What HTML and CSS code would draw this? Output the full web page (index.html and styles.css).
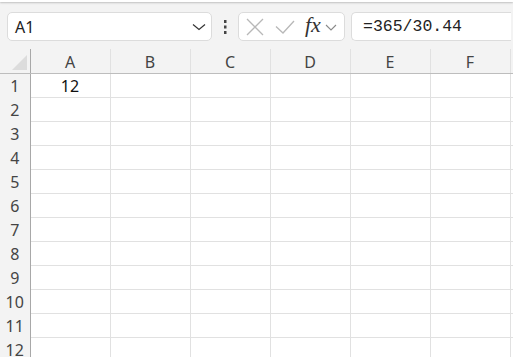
FILE: index.html
```html
<!DOCTYPE html>
<html lang="en">
<head>
  <meta charset="UTF-8">
  <title>Sheet</title>
  <link rel="stylesheet" href="styles.css">
</head>
<body>
  <div class="ribbon-edge"></div>

  <div class="formula-bar">
    <div class="name-box">
      <span>A1</span>
      <svg class="chevron" width="14" height="8" viewBox="0 0 14 8"><path d="M1 1.5 L7 6.5 L13 1.5" fill="none" stroke="#333" stroke-width="1.2"/></svg>
    </div>
    <div class="more">
      <svg width="4" height="16" viewBox="0 0 4 16"><rect x="1" y="1" width="2.5" height="3" fill="#444"/><rect x="1" y="6.5" width="2.5" height="3" fill="#444"/><rect x="1" y="12" width="2.5" height="3" fill="#444"/></svg>
    </div>
    <div class="buttons">
      <svg width="18" height="18" viewBox="0 0 18 18"><path d="M1 1 L17 17 M17 1 L1 17" stroke="#b8b8b8" stroke-width="1.3"/></svg>
      <svg width="20" height="14" viewBox="0 0 20 14"><path d="M1 6.5 L8 13 L19 1" fill="none" stroke="#b8b8b8" stroke-width="1.3"/></svg>
      <span class="fx">fx</span>
      <svg width="12" height="7" viewBox="0 0 12 7"><path d="M1 1 L6 6 L11 1" fill="none" stroke="#8a8a8a" stroke-width="1.1"/></svg>
    </div>
    <div class="formula">=365/30.44</div>
  </div>

  <table class="sheet">
    <colgroup>
      <col class="col-head">
      <col class="col"><col class="col"><col class="col"><col class="col"><col class="col"><col class="col">
      <col>
    </colgroup>
    <tr class="head-row">
      <th class="corner"><span class="triangle"></span></th>
      <th>A</th><th>B</th><th>C</th><th>D</th><th>E</th><th>F</th><th></th>
    </tr>
    <tr><th>1</th><td class="num">12</td><td></td><td></td><td></td><td></td><td></td><td></td></tr>
    <tr><th>2</th><td></td><td></td><td></td><td></td><td></td><td></td><td></td></tr>
    <tr><th>3</th><td></td><td></td><td></td><td></td><td></td><td></td><td></td></tr>
    <tr><th>4</th><td></td><td></td><td></td><td></td><td></td><td></td><td></td></tr>
    <tr><th>5</th><td></td><td></td><td></td><td></td><td></td><td></td><td></td></tr>
    <tr><th>6</th><td></td><td></td><td></td><td></td><td></td><td></td><td></td></tr>
    <tr><th>7</th><td></td><td></td><td></td><td></td><td></td><td></td><td></td></tr>
    <tr><th>8</th><td></td><td></td><td></td><td></td><td></td><td></td><td></td></tr>
    <tr><th>9</th><td></td><td></td><td></td><td></td><td></td><td></td><td></td></tr>
    <tr><th>10</th><td></td><td></td><td></td><td></td><td></td><td></td><td></td></tr>
    <tr><th>11</th><td></td><td></td><td></td><td></td><td></td><td></td><td></td></tr>
    <tr><th>12</th><td></td><td></td><td></td><td></td><td></td><td></td><td></td></tr>
  </table>
</body>
</html>
```

FILE: styles.css
```css
body {
  margin: 0;
  background: #f3f3f3;
  font-family: "Noto Sans", sans-serif;
  overflow: hidden;
}

.ribbon-edge {
  height: 2px;
  background: #fff;
  box-shadow: 0 1px 2px rgba(0, 0, 0, 0.22);
}

.formula-bar {
  display: flex;
  align-items: center;
  height: 29px;
  padding: 10px 0 0 7px;
}

.name-box,
.buttons,
.formula {
  height: 29px;
  box-sizing: border-box;
  background: #fff;
  border: 1px solid #dcdcdc;
  border-radius: 5px;
  display: flex;
  align-items: center;
}

.name-box {
  width: 205px;
  padding: 0 5px 0 7px;
  justify-content: space-between;
  font-size: 16px;
  color: #222;
}

.more {
  width: 26px;
  display: flex;
  justify-content: center;
}

.buttons {
  width: 107px;
  padding: 0 0 0 7px;
}

.buttons svg:nth-child(1) { margin: 0 11px 0 0; }
.buttons svg:nth-child(2) { margin: 1px 10px 0 0; }
.buttons svg:nth-child(4) { margin: 2px 0 0 4px; }

.fx {
  font-family: "Liberation Serif", serif;
  font-style: italic;
  font-size: 22px;
  color: #333;
  margin-top: -4px;
}

.formula {
  margin-left: 6px;
  width: 160px;
  padding-left: 11px;
  font-family: "Liberation Mono", monospace;
  font-size: 16.5px;
  color: #222;
  border-right: none;
  border-radius: 5px 0 0 5px;
}

.sheet {
  margin-top: 8px;
  border-collapse: collapse;
  table-layout: fixed;
  width: 520px;
  font-size: 16px;
}

.col-head { width: 30px; }
.col { width: 80px; }

.sheet th,
.sheet td {
  height: 22px;
  padding: 1px 0 0;
  border-right: 1px solid #e1e1e1;
  border-bottom: 1px solid #e1e1e1;
  text-align: center;
  font-weight: normal;
  line-height: 22px;
}

.sheet th {
  color: #444;
  background: #f3f3f3;
}

.sheet tr th:first-child {
  border-right: 1px solid #a8a8a8;
  border-bottom: none;
}

.head-row th {
  height: 23px;
  border-bottom: 1px solid #bdbdbd;
}

.sheet .head-row th:first-child {
  border-bottom: 1px solid #bdbdbd;
}

.sheet td {
  background: #fff;
}

.num {
  color: #111;
}

.corner {
  position: relative;
}

.triangle {
  position: absolute;
  right: 3px;
  bottom: 3px;
  width: 0;
  height: 0;
  border-left: 15px solid transparent;
  border-bottom: 15px solid #dcdcdc;
}
```
